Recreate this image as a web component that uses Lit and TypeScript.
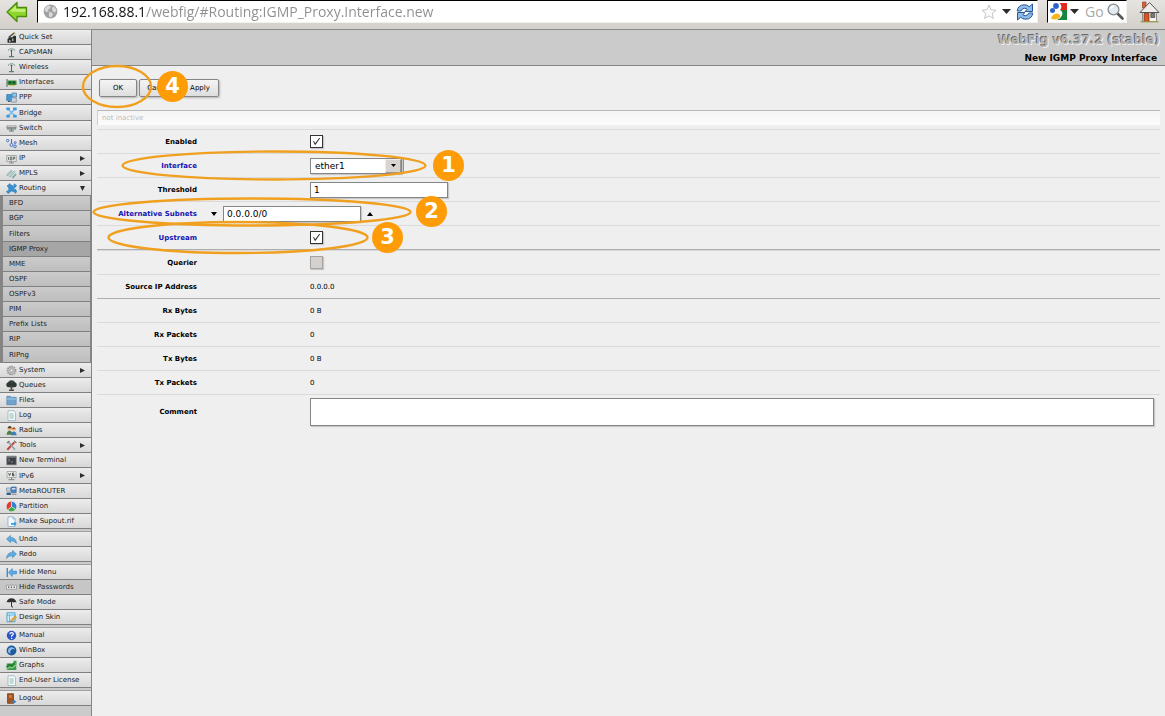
import { LitElement, html, css, svg, nothing, type TemplateResult } from "lit";
import { customElement } from "lit/decorators.js";
import { classMap } from "lit/directives/class-map.js";

type Glyph = ReturnType<typeof svg>;

const page = svg`<path d="M2 .8h6l1.5 1.7v8H2z" fill="#f4fbfb" stroke="#8ab" stroke-width=".7"/><path d="M3.5 4h4M3.5 6h4.5M3.5 8h4" stroke="#7aa89a" stroke-width=".8"/>`;
const antenna = svg`<path d="M5.5 4v5M3 9.7h5" stroke="#3f6a58" stroke-width="1"/><circle cx="5.5" cy="3.4" r="1" fill="#3f6a58"/><path d="M2.5 2.6q3-2.6 6 0M2.7 4.2q-.8-.8 0-1.8M8.3 4.2q.8-.8 0-1.8" fill="none" stroke="#7d9a8e" stroke-width=".8"/>`;

const icons: Record<string, Glyph> = {
  wand: svg`<path d="M1.500 10.800V7l2-1.500V4.800L6 5.500l2-2 2 .5v6.800z" fill="#2e302c"/><path d="M3 8h1.500v2H3zM6 6.500h1.500V9H6z" fill="#a8aaa4"/><path d="M2.500 5.500L8.500.8" stroke="#444" stroke-width="1.300"/><path d="M7.500.3l2.500 1.200-1 1.300z" fill="#d6b84a"/>`,
  antenna,
  card: svg`<path d="M1 2v8" stroke="#777" stroke-width="1.2"/><path d="M1.5 3.5h9v4.5h-9z" fill="#2f8b3c"/><path d="M3 4.5h2v2H3zM6.5 4.5h2.500v2H6.5z" fill="#174a20"/><path d="M3 8.4h6" stroke="#c9b23c" stroke-width=".8"/>`,
  ppp: svg`<path d="M.7 2.500h4.800v6H.7z" fill="#3f97d6" stroke="#2c6fa5" stroke-width=".6"/><path d="M6 1h4.500v4H6z" fill="#8cc3ea" stroke="#39698f" stroke-width=".6"/><path d="M5.500 5.800h4.800v4.400H5.500z" fill="#c9d6e0" stroke="#678" stroke-width=".6"/><path d="M2 9.500h2.500" stroke="#555"/>`,
  bridge: svg`<g fill="#3d9be0"><path d="M.3.6h3.600v3.200L.3 3zM10.7.6H7.1v3.200l3.600-.8zM.3 10.400h3.600V7.2L.3 8zM10.700 10.400H7.1V7.2l3.600.8z"/></g><path d="M3 3l5 5M8 3L3 8" stroke="#6bb5ea" stroke-width="1.2"/>`,
  switch: svg`<path d="M.5 2.5h10v3H.5z" fill="#8a8f90"/><path d="M1.5 3.5h8" stroke="#d5dad8" stroke-width=".8"/><path d="M1 6h9M3 8h5M5.5 5.5V8" stroke="#5d7a6b" stroke-width="1"/>`,
  mesh: svg`<g fill="#dfe8fa" stroke="#4c6fc0" stroke-width="1"><circle cx="1.7" cy="2.600" r="1.200"/><circle cx="5.500" cy="7" r="1.500"/><circle cx="9" cy="8.300" r="1.300"/><circle cx="9.200" cy="4.600" r="1"/></g><path d="M5.500 1v4.500" stroke="#4c6fc0" stroke-width="1.100"/>`,
  ip: svg`<path d="M.7 2.5h9.6v6H.7z" fill="#e3e6e3" stroke="#889088" stroke-width=".7"/><path d="M2.5 4v3M4.3 4h1.400v3H4.3zM7.3 7V4h1.400v1.700H7.3" fill="none" stroke="#555f58" stroke-width=".8"/><path d="M5.5 8.500V10M3 10h5" stroke="#889088"/>`,
  mpls: svg`<path d="M1 7.500l5-5M3.500 9l5.500-6M6.500 10l3.500-4" stroke="#7ba6a0" stroke-width="1.800"/><path d="M1.200 7.300l5-5M3.700 8.800l5.500-6" stroke="#e2f2ee" stroke-width=".8"/>`,
  routing: svg`<path d="M1 3l3-2.500V2h2l1 2 1-1V.8l2.700 1.700L9 4.500 7.500 6l1.500 1.300V6l2 2.500L9 10.500V9L5.500 8 2 10.500l-1.500-2L3 7 2.500 4.500z" fill="#3593d6" stroke="#1f6aa6" stroke-width=".5"/>`,
  gear: svg`<circle cx="5.5" cy="5.5" r="4" fill="#c6c6c6" stroke="#979797" stroke-width="1.800" stroke-dasharray="1.500 .8"/><circle cx="5.5" cy="5.5" r="1.600" fill="#efefef" stroke="#888" stroke-width=".7"/>`,
  tree: svg`<circle cx="5.5" cy="3.900" r="3.600" fill="#3a4742"/><circle cx="2.800" cy="4.800" r="2.500" fill="#2e3936"/><circle cx="8.200" cy="4.800" r="2.500" fill="#2e3936"/><path d="M5.500 6v4.300M3 10.400h5" stroke="#55483f" stroke-width="1.600"/>`,
  folder: svg`<path d="M.8 1.300h3.600l1 1h4.800v7.400H.8z" fill="#6fa3cf" stroke="#4b7eab" stroke-width=".6"/><path d="M1 4h9" stroke="#a7cbe8"/>`,
  page,
  users: svg`<circle cx="3.7" cy="3.500" r="2.200" fill="#e6b789"/><path d="M1.500 3.200Q3.700-1 5.900 3.200z" fill="#44342a"/><path d="M.6 9.800q.4-4 2.900-4t3 4z" fill="#4b7f4a"/><circle cx="7.800" cy="4.300" r="2.100" fill="#f0c79b"/><path d="M5.700 4.200q2.100-4 4.200 0z" fill="#b3552a"/><path d="M5 10.200q.4-3.800 2.800-3.800t2.900 3.800z" fill="#3b7fb8"/>`,
  tools: svg`<path d="M1.300 9.800l7-7.400" stroke="#c43f35" stroke-width="2"/><path d="M2 1.500l7 8.300" stroke="#9aa0a6" stroke-width="1.700"/><path d="M1 3l2.400-2M8 .8L10.400 3" stroke="#777" stroke-width="1.200"/>`,
  terminal: svg`<path d="M.8 1.200h9.400v8.600H.8z" fill="#3c4045" stroke="#777" stroke-width=".7"/><path d="M1.200 2h8.600" stroke="#8e959c" stroke-width="1"/><path d="M2.300 4l1.500 1.200-1.500 1.200M4.800 7h2" stroke="#aaa" stroke-width=".8" fill="none"/>`,
  ipv6: svg`<path d="M1 1.500h9v6H1z" fill="#e9ece9" stroke="#929a92" stroke-width=".7"/><path d="M2.600 3.200l1 2.400 1-2.400M8 3H6.500v2.800H8V4.500H6.600" fill="none" stroke="#444" stroke-width=".9"/><path d="M5.500 7.500v2M2.500 9.700h6" stroke="#7a827a"/>`,
  meta: svg`<path d="M.6 2h4v3h-4z" fill="#cbd9e6" stroke="#5c7890" stroke-width=".6"/><path d="M5.200 1h5v5.500h-5z" fill="#4a86c5" stroke="#2d5f94" stroke-width=".6"/><path d="M6 2h3.400v1.500H6z" fill="#cfe2f5"/><path d="M.6 6.500h4.200v2.500H.6z" fill="#2d5f94"/><path d="M5.500 8.300h5" stroke="#999" stroke-width="1.400"/>`,
  pie: svg`<path d="M5.500 5.500V.6a4.900 4.900 0 0 1 4 7.700z" fill="#2f83d6"/><path d="M5.500 5.500l4 2.800A4.900 4.900 0 0 1 1.900 8.800z" fill="#3aaa45"/><path d="M5.500 5.500L1.900 8.800A4.900 4.900 0 0 1 5.500.6z" fill="#e13c2f"/><path d="M5.500.8v4.700l3.800 2.700M5.500 5.500L2 8.700" stroke="#fff" stroke-width=".6" fill="none"/>`,
  pageout: svg`<path d="M2 .8h5l2.200 2.200v7.500H2z" fill="#f2faff" stroke="#7ba2c4" stroke-width=".7"/><path d="M7 .8V3h2.200" fill="none" stroke="#7ba2c4" stroke-width=".7"/><path d="M5 7h3V5.500l2.700 2.300L8 10V8.700H5z" fill="#3b9be0"/>`,
  undo: svg`<path d="M.5 5l4-3.600v2q5.400-.2 6 6-2.200-3-6-2.700v2z" fill="#5fabe2" stroke="#3579ae" stroke-width=".5"/>`,
  redo: svg`<path d="M10.500 5l-4-3.600v2Q1.100 3.200.5 9.400q2.200-3 6-2.700v2z" fill="#5fabe2" stroke="#3579ae" stroke-width=".5"/>`,
  hide: svg`<path d="M1.300 1v9" stroke="#3b8fd0" stroke-width="1.400"/><path d="M2.300 5.500l4-4v2.600h4.200v2.800H6.300v2.600z" fill="#5aaee8" stroke="#2c79b6" stroke-width=".5"/>`,
  password: svg`<path d="M.5 3.200h10v4H.5z" fill="#f2f2f2" stroke="#8a8a8a" stroke-width=".7"/><path d="M2 5.200h1.300M4.800 5.200h1.300M7.600 5.200h1.300" stroke="#333" stroke-width="1.200"/>`,
  umbrella: svg`<path d="M.5 5.400Q1.300 1.400 5.500 1.200q4.200.2 5 4.200-1.400-1-2.500 0-1.200-.9-2.500 0-1.300-.9-2.500 0-1.200-1-2.500 0z" fill="#2f3333"/><path d="M5.500 5v4.200q.1 1.200 1.500.8" fill="none" stroke="#2f3333" stroke-width="1"/>`,
  design: svg`<path d="M1 .8h8v9H1z" fill="#d6effb" stroke="#3c9cc9" stroke-width=".9"/><path d="M1 3h8M3.500 3v7" stroke="#3c9cc9" stroke-width=".7"/><path d="M4.500 9.800l.6-2 4-4 1.400 1.400-4 4z" fill="#f0b13a" stroke="#a8682a" stroke-width=".5"/>`,
  help: svg`<circle cx="5.500" cy="5.500" r="4.700" fill="#2b55c4"/><path d="M3.900 4.300q0-1.700 1.700-1.700t1.700 1.400q0 1-1.700 1.700v1M5.600 7.700v1.200" stroke="#fff" stroke-width="1.200" fill="none"/>`,
  winbox: svg`<circle cx="5.500" cy="5.500" r="4.900" fill="#215b9c"/><path d="M2 6.500Q2 2.300 6 2.300q2.500.2 3 2.400-2-1.300-4 .2-1.600 1.400-.4 3.600Q2.400 8.500 2 6.500z" fill="#8fc0ea"/>`,
  graph: svg`<path d="M.7 3.500h9.600V10H.7z" fill="#3c9c49"/><path d="M.6 7.200l2.700-2.700 2 1.600L9 2" stroke="#1d7a2b" stroke-width="1.500" fill="none"/><path d="M6.800.8h3.700v3.700z" fill="#2fa63f"/><path d="M1 9l3-2 2 1 4-3" stroke="#bfe8c3" stroke-width=".8" fill="none"/>`,
  door: svg`<path d="M1.500.7h6v9.600h-6z" fill="#a3531f" stroke="#6d3310" stroke-width=".7"/><path d="M3 2h3v3H3z" fill="#c77a3e"/><path d="M5 8h2.500V6.500l3 2.300-3 2V9.500H5z" fill="#3d7fc2"/>`,
};

interface Entry {
  label: string;
  icon: string;
  arrow?: "side" | "down";
  tall?: boolean;
  active?: boolean;
  children?: { label: string; tall?: boolean; active?: boolean }[];
}

const menu: Entry[][] = [
  [
    { label: "Quick Set", icon: "wand" },
    { label: "CAPsMAN", icon: "antenna" },
    { label: "Wireless", icon: "antenna" },
    { label: "Interfaces", icon: "card" },
    { label: "PPP", icon: "ppp" },
    { label: "Bridge", icon: "bridge", tall: true },
    { label: "Switch", icon: "switch" },
    { label: "Mesh", icon: "mesh" },
    { label: "IP", icon: "ip", arrow: "side" },
    { label: "MPLS", icon: "mpls", arrow: "side" },
    {
      label: "Routing",
      icon: "routing",
      arrow: "down",
      children: [
        { label: "BFD" },
        { label: "BGP" },
        { label: "Filters", tall: true },
        { label: "IGMP Proxy", active: true },
        { label: "MME" },
        { label: "OSPF" },
        { label: "OSPFv3" },
        { label: "PIM" },
        { label: "Prefix Lists" },
        { label: "RIP" },
        { label: "RIPng", tall: true },
      ],
    },
    { label: "System", icon: "gear", arrow: "side" },
    { label: "Queues", icon: "tree" },
    { label: "Files", icon: "folder" },
    { label: "Log", icon: "page" },
    { label: "Radius", icon: "users" },
    { label: "Tools", icon: "tools", arrow: "side" },
    { label: "New Terminal", icon: "terminal" },
    { label: "IPv6", icon: "ipv6", arrow: "side", tall: true },
    { label: "MetaROUTER", icon: "meta" },
    { label: "Partition", icon: "pie" },
    { label: "Make Supout.rif", icon: "pageout" },
  ],
  [
    { label: "Undo", icon: "undo" },
    { label: "Redo", icon: "redo" },
  ],
  [
    { label: "Hide Menu", icon: "hide" },
    { label: "Hide Passwords", icon: "password", active: true },
    { label: "Safe Mode", icon: "umbrella" },
    { label: "Design Skin", icon: "design" },
  ],
  [
    { label: "Manual", icon: "help" },
    { label: "WinBox", icon: "winbox" },
    { label: "Graphs", icon: "graph" },
    { label: "End-User License", icon: "page" },
  ],
  [{ label: "Logout", icon: "door" }],
];

@customElement("browser-bar")
export class BrowserBar extends LitElement {
  static styles = css`
    :host {
      display: flex;
      align-items: flex-start;
      height: 30px;
      box-sizing: border-box;
      background: linear-gradient(#e6e4e1, #d3cfca);
      border-bottom: 1px solid #8c8a84;
      font-family: "DejaVu Sans", sans-serif;
    }
    button {
      border: 0;
      padding: 0;
      background: none;
      display: flex;
      align-items: center;
      justify-content: center;
    }
    .back { width: 37px; height: 23px; padding-right: 3px; }
    .field {
      display: flex;
      align-items: center;
      gap: 5px;
      height: 23px;
      box-sizing: border-box;
      background: #fff;
      border: 1px solid #f4f2ef;
      border-top-color: #000;
      border-left-color: #000;
    }
    .address { flex: 1; min-width: 0; padding: 0 3px 0 5px; }
    .url {
      flex: 1;
      min-width: 0;
      border: 0;
      padding: 0;
      outline: 0;
      height: 20px;
      font: 14px/20px "Open Sans", "DejaVu Sans", sans-serif;
      color: transparent;
      background: linear-gradient(90deg, #111 83px, #8e8e8e 83px);
      background-clip: text;
      -webkit-background-clip: text;
    }
    .search { width: 80px; margin: 0 12px 0 9px; padding: 0 2px; gap: 3px; }
    .term {
      flex: 1;
      width: 20px;
      min-width: 0;
      border: 0;
      padding: 0 0 0 3px;
      outline: 0;
      font: 14px/20px "Open Sans", "DejaVu Sans", sans-serif;
    }
    .term::placeholder { color: #aaa; opacity: 1; }
    .home { width: 21px; height: 23px; margin-right: 5px; }
  `;

  render() {
    return html`
      <button class="back" aria-label="Back">
        <svg width="22" height="22" viewBox="0 0 22 22"><path d="M1 11L11 1.500v5h9.500v9H11v5z" fill="#8fd62c" stroke="#4b8c0c" stroke-width="1.300" stroke-linejoin="round"/><path d="M3.500 10.500l6.500-6v3.400h9.200v3z" fill="#c0ee78"/></svg>
      </button>
      <div class="field address">
        <svg width="15" height="15" viewBox="0 0 15 15"><circle cx="7.500" cy="7.500" r="6.900" fill="#a2a2a2"/><path d="M2 4l3-2.500 3 1-1 2-2 1 .5 2-2 .5-2-1.500zM6 8l3 .5 1 2-2 3-2-1zM9.500 2.500l2.500 1 1.500 3-1.500 2-2-1-1-2z" fill="#d8d8d8"/></svg>
        <input class="url" aria-label="Address" value="192.168.88.1/webfig/#Routing:IGMP_Proxy.Interface.new" />
        <svg width="16" height="16" viewBox="0 0 16 16"><path d="M8 1l2 4.700 5 .5-3.800 3.300 1.200 5L8 11.800l-4.400 2.700 1.200-5L1 6.200l5-.5z" fill="#fcfcfc" stroke="#c4c4c4"/></svg>
        <svg width="9" height="5" viewBox="0 0 9 5"><path d="M0 0h9L4.500 5z" fill="#2b2b2b"/></svg>
        <button aria-label="Reload">
          <svg width="18" height="18" viewBox="0 0 18 18"><g fill="#8fbbe8" stroke="#24589c" stroke-width="1" stroke-linejoin="round"><path d="M1.200 8Q2 1.800 8.500 1.800q3 0 4.700 2L16.500 1v7.500H9l2.200-2.200q-1-1-2.700-1Q6 5.300 5 8z"/><path d="M16.800 10q-.8 6.200-7.300 6.200-3 0-4.700-2L1.500 17V9.500H9l-2.200 2.200q1 1 2.700 1Q12 12.700 13 10z"/></g></svg>
        </button>
      </div>
      <div class="field search">
        <svg width="17" height="17" viewBox="0 0 17 17"><path d="M7 0h10v9H9z" fill="#e22a1c"/><path d="M9 7h8v10H7z" fill="#12893a"/><path d="M9.500 0q3.500 3.500.5 7 3.500 2 2 5.500Q10.500 16 7 17H0V0z" fill="#fff"/><circle cx="6" cy="3" r="2.900" fill="#2c63c8"/><circle cx="2.500" cy="7.500" r="2.500" fill="#2c63c8"/><path d="M2 13q4-4 7.500-1.500Q11 14 8.500 15.500q-4 2-7.500 0z" fill="#f3b61f"/></svg>
        <svg width="9" height="5" viewBox="0 0 9 5"><path d="M0 0h9L4.500 5z" fill="#2b2b2b"/></svg>
        <input class="term" aria-label="Search" placeholder="Google" />
        <svg width="17" height="17" viewBox="0 0 17 17"><path d="M11 11l4.500 4.500" stroke="#555" stroke-width="2.600" stroke-linecap="round"/><circle cx="6.500" cy="6.500" r="5.400" fill="#e3ebf2" stroke="#8a8a8a" stroke-width="1.300"/><path d="M3.600 6q.4-2.400 3-2.700" stroke="#fff" stroke-width="1.300" fill="none"/></svg>
      </div>
      <button class="home" aria-label="Home">
        <svg width="21" height="22" viewBox="0 0 21 22"><path d="M3.500 1h3.500v6H3.500z" fill="#d9622f" stroke="#8c3a18" stroke-width=".6"/><path d="M3.500 10.500h14V20.500h-14z" fill="#f6f3ec" stroke="#777" stroke-width=".8"/><path d="M10.500 1.500L20 11.500H1z" fill="#efedea" stroke="#555" stroke-width="1"/><path d="M5 12.500h5v8H5z" fill="#d4572a" stroke="#7a2d10" stroke-width=".7"/><path d="M11.800 12.500h4v4h-4z" fill="#7b7b7b" stroke="#444" stroke-width=".7"/><path d="M1.500 20.800h18" stroke="#9a9c4a" stroke-width="1.200"/></svg>
      </button>
    `;
  }
}

@customElement("side-menu")
export class SideMenu extends LitElement {
  static styles = css`
    :host {
      display: block;
      width: 92px;
      flex: none;
      box-sizing: border-box;
      background: #cbcbcb;
      border-right: 1px solid #858585;
    }
    nav { display: flex; flex-direction: column; gap: 3px; }
    .group { display: flex; flex-direction: column; }
    .item, .sub {
      display: flex;
      align-items: center;
      box-sizing: border-box;
      height: 15px;
      border: 0;
      border-bottom: 1px solid #808080;
      color: #1c1c1c;
      font: 7px/14px "DejaVu Sans", sans-serif;
      text-align: left;
      white-space: nowrap;
    }
    .item {
      padding: 0 6px;
      gap: 2px;
      background: linear-gradient(#ececec, #d8d8d8);
    }
    .item.active { background: #c6c6c6; }
    .item.tall, .sub.tall { height: 16px; }
    .group > .item:first-child { box-shadow: 0 -1px #a0a0a0; }
    .text { flex: 1; }
    .children {
      display: flex;
      flex-direction: column;
      border-left: 3px solid #858585;
      border-right: 1px solid #858585;
    }
    .sub { padding: 0 6px; background: linear-gradient(#cbcbcb, #bebebe); }
    .sub.active { background: #a6a6a6; }
  `;

  private arrow(kind?: "side" | "down") {
    if (!kind) return nothing;
    return html`<svg width="5" height="5" viewBox="0 0 5 5">
      <path d=${kind === "side" ? "M0 0L5 2.500L0 5z" : "M0 0H5L2.500 5z"} fill="#2c2c2c" />
    </svg>`;
  }

  private entry(e: Entry): TemplateResult {
    return html`
      <button class=${classMap({ item: true, tall: !!e.tall, active: !!e.active })}>
        <svg width="11" height="11" viewBox="0 0 11 11" aria-hidden="true">${icons[e.icon]}</svg>
        <span class="text">${e.label}</span>
        ${this.arrow(e.arrow)}
      </button>
      ${e.children
        ? html`<div class="children">
            ${e.children.map(
              (c) => html`<button class=${classMap({ sub: true, tall: !!c.tall, active: !!c.active })}>${c.label}</button>`
            )}
          </div>`
        : nothing}
    `;
  }

  render() {
    return html`<nav>${menu.map((g) => html`<div class="group">${g.map((e) => this.entry(e))}</div>`)}</nav>`;
  }
}

@customElement("interface-form")
export class InterfaceForm extends LitElement {
  static styles = css`
    :host {
      display: block;
      color: #000;
      font: 7px/10px "DejaVu Sans", sans-serif;
    }
    .head {
      display: flex;
      flex-direction: column;
      align-items: flex-end;
      box-sizing: border-box;
      height: 36px;
      padding: 0 5px 0 0;
      background: #cbcbcb;
      border-bottom: 1px solid #858585;
    }
    .brand {
      font-size: 12px;
      line-height: 20px;
      font-weight: bold;
      color: #b4b4b4;
      text-shadow: -1px -1px #6a6a6a, 1px 1px #ececec;
    }
    .title { margin: 0; padding-right: 3px; font-size: 9px; line-height: 16px; font-weight: bold; }
    .body { padding: 13px 5px 0 5px; }
    .actions { display: flex; gap: 2px; padding-left: 2px; }
    .actions button {
      width: 38px;
      height: 18px;
      padding: 0;
      border: 1px solid #858585;
      border-radius: 2px;
      background: linear-gradient(#f4f4f4, #dedede);
      box-shadow: 1px 1px 2px #b4b4b4;
      color: #000;
      font: inherit;
    }
    .actions .wide { width: 40px; }
    .status {
      box-sizing: border-box;
      height: 15px;
      margin: 13px 0 4px;
      padding: 0 4px;
      border-top: 1px solid #b8b8b8;
      border-left: 1px solid #d0d0d0;
      background: linear-gradient(#f5f5f5, #fcfcfc);
      color: #bdbdbd;
      line-height: 14px;
    }
    .section { border-top: 1px solid #dadada; }
    .row {
      display: flex;
      align-items: center;
      box-sizing: border-box;
      height: 24px;
      border-bottom: 1px solid #dadada;
    }
    .row:last-child { border-bottom-color: #adadad; }
    .section.flush { border-top: 0; }
    .section.last .row:last-child { border-bottom: 0; height: 33px; }
    .name { width: 100px; text-align: right; font-weight: bold; }
    .name.set { color: #1414b4; }
    .value { flex: 1; display: flex; align-items: center; padding-left: 113px; }
    .value.multi { padding-left: 14px; gap: 6px; }
    .toggle { border: 0; padding: 0; background: none; display: flex; }
    .box {
      box-sizing: border-box;
      width: 138px;
      height: 16px;
      margin: 0;
      padding: 0 3px;
      border: 1px solid #858585;
      background: #fff;
      box-shadow: 1px 1px 1px #c8c8c8;
      font: 9px/14px "DejaVu Sans", sans-serif;
      color: #000;
      outline: 0;
    }
    .pick { position: relative; display: flex; border-right: 1px solid #858585; padding-right: 1px; }
    .pick .box { width: 92px; padding: 0 4px; appearance: none; border-radius: 0; }
    .drop {
      position: absolute;
      right: 2px;
      top: 1px;
      width: 16px;
      height: 14px;
      box-sizing: border-box;
      display: flex;
      align-items: center;
      justify-content: center;
      background: #d8d4d0;
      border: 1px solid #9a9691;
      border-top-color: #f0eeec;
      border-left-color: #f0eeec;
      pointer-events: none;
    }
    .tick {
      appearance: none;
      box-sizing: border-box;
      width: 13px;
      height: 13px;
      margin: 0;
      border: 1px solid #333;
      background: #fff;
      box-shadow: 1px 1px 1px #c8c8c8;
    }
    .tick:checked::before {
      content: "";
      display: block;
      width: 11px;
      height: 11px;
      background: #333;
      clip-path: polygon(18% 46%, 30% 50%, 38% 66%, 74% 18%, 84% 18%, 42% 80%, 34% 80%);
    }
    .tick:disabled { background: #d5d1ce; border-color: #a5a19e; }
    .comment {
      flex: 1;
      height: 28px;
      margin-right: 6px;
      resize: none;
    }
  `;

  private reading(name: string, value: string) {
    return html`<div class="row"><div class="name">${name}</div><div class="value">${value}</div></div>`;
  }

  render() {
    return html`
      <header class="head">
        <div class="brand">WebFig v6.37.2 (stable)</div>
        <h1 class="title">New IGMP Proxy Interface</h1>
      </header>
      <div class="body">
        <div class="actions">
          <button>OK</button><button class="wide">Cancel</button><button>Apply</button>
        </div>
        <div class="status">not inactive</div>
        <div class="section">
          <div class="row">
            <label class="name" for="enabled">Enabled</label>
            <div class="value"><input class="tick" id="enabled" type="checkbox" checked /></div>
          </div>
          <div class="row">
            <label class="name set" for="interface">Interface</label>
            <div class="value">
              <div class="pick">
                <select class="box" id="interface"><option>ether1</option></select>
                <span class="drop"><svg width="5" height="3" viewBox="0 0 5 3"><path d="M0 0h5L2.500 3z"/></svg></span>
              </div>
            </div>
          </div>
          <div class="row">
            <label class="name" for="threshold">Threshold</label>
            <div class="value"><input class="box" id="threshold" value="1" /></div>
          </div>
          <div class="row">
            <label class="name set" for="subnets">Alternative Subnets</label>
            <div class="value multi">
              <button class="toggle" aria-label="Add"><svg width="6" height="4" viewBox="0 0 6 4"><path d="M0 0h6L3 4z"/></svg></button>
              <input class="box" id="subnets" value="0.0.0.0/0" />
              <button class="toggle" aria-label="Remove"><svg width="6" height="4" viewBox="0 0 6 4"><path d="M0 4h6L3 0z"/></svg></button>
            </div>
          </div>
          <div class="row">
            <label class="name set" for="upstream">Upstream</label>
            <div class="value"><input class="tick" id="upstream" type="checkbox" checked /></div>
          </div>
        </div>
        <div class="section">
          <div class="row">
            <label class="name" for="querier">Querier</label>
            <div class="value"><input class="tick" id="querier" type="checkbox" disabled /></div>
          </div>
          ${this.reading("Source IP Address", "0.0.0.0")}
        </div>
        <div class="section flush last">
          ${this.reading("Rx Bytes", "0 B")} ${this.reading("Rx Packets", "0")}
          ${this.reading("Tx Bytes", "0 B")} ${this.reading("Tx Packets", "0")}
          <div class="row">
            <label class="name" for="comment">Comment</label>
            <div class="value"><textarea class="box comment" id="comment"></textarea></div>
          </div>
        </div>
      </div>
    `;
  }
}

@customElement("step-marks")
export class StepMarks extends LitElement {
  static styles = css`
    :host {
      position: absolute;
      inset: 0;
      overflow: hidden;
      pointer-events: none;
    }
    .rings { position: absolute; left: 0; top: 0; }
    .step {
      position: absolute;
      width: 31px;
      height: 31px;
      border-radius: 50%;
      background: #fe9c07;
      color: #fff;
      font: bold 21px/30px "DejaVu Sans", sans-serif;
      text-align: center;
    }
    .one { left: 433px; top: 150px; }
    .two { left: 416px; top: 196px; }
    .three { left: 372px; top: 222px; }
    .four { left: 157px; top: 71px; }
  `;

  render() {
    return html`
      <svg class="rings" width="470" height="270" viewBox="0 0 470 270" fill="none" stroke="#f0a01e" stroke-width="2.400">
        <ellipse cx="117" cy="86.500" rx="34" ry="20.500" />
        <ellipse cx="274" cy="165.500" rx="151.500" ry="14" />
        <ellipse cx="252" cy="212" rx="158.500" ry="13.500" />
        <ellipse cx="238" cy="237.500" rx="129.500" ry="15.500" />
      </svg>
      <span class="step one">1</span>
      <span class="step two">2</span>
      <span class="step three">3</span>
      <span class="step four">4</span>
    `;
  }
}

@customElement("app-root")
export class AppRoot extends LitElement {
  static styles = css`
    :host {
      position: relative;
      display: flex;
      flex-direction: column;
      min-height: 100vh;
      background: #efefef;
    }
    .workspace { flex: 1; display: flex; }
    .content { flex: 1; min-width: 0; }
  `;

  render() {
    return html`
      <browser-bar></browser-bar>
      <div class="workspace">
        <side-menu></side-menu>
        <interface-form class="content"></interface-form>
      </div>
      <step-marks></step-marks>
    `;
  }
}
